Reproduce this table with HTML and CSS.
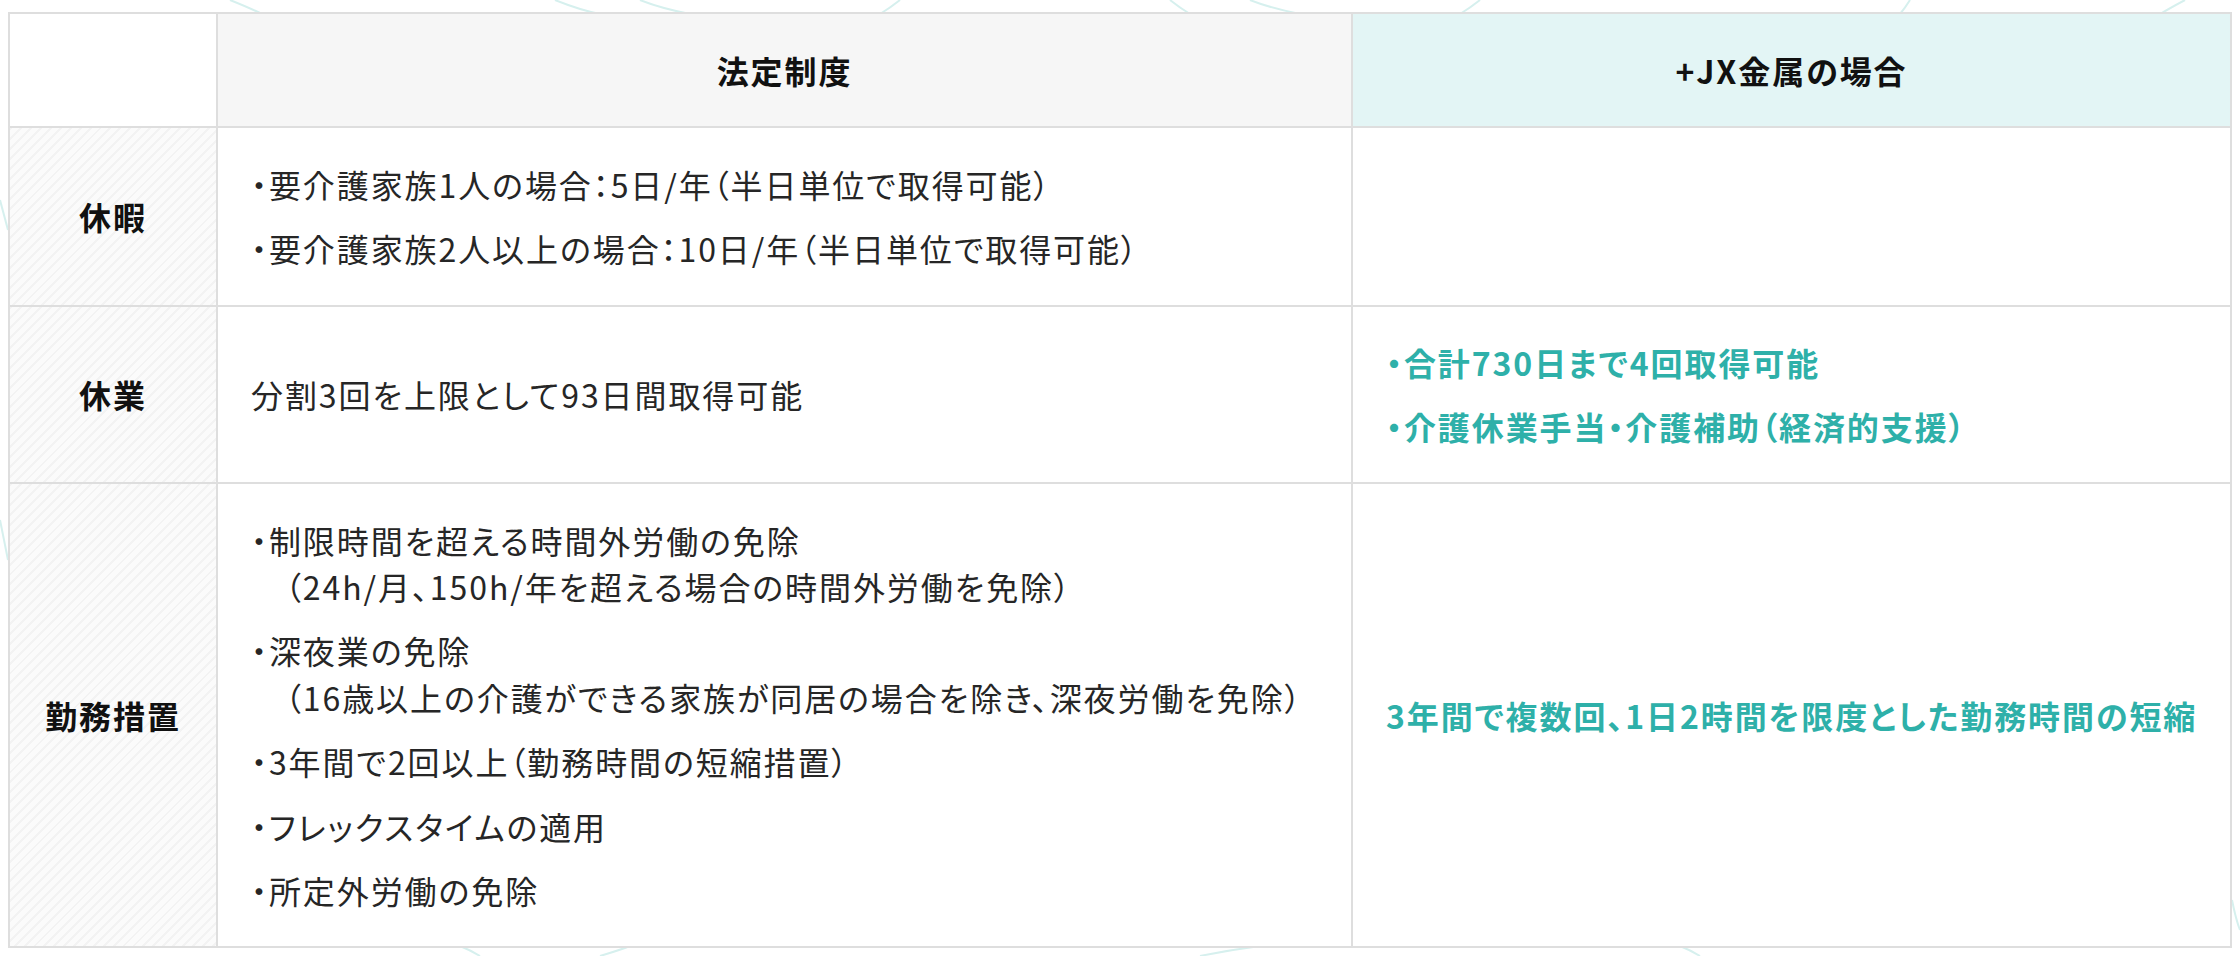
FILE: index.html
```html
<!DOCTYPE html>
<html lang="ja">
<head>
<meta charset="utf-8">
<title>介護支援制度</title>
<link rel="stylesheet" href="styles.css">
</head>
<body>
<div class="page">
  <svg class="deco" width="2240" height="956" viewBox="0 0 2240 956" aria-hidden="true">
    <g fill="none" stroke="#d6f0ee" stroke-width="2">
      <path d="M230 0 Q250 8 262 14"/>
      <path d="M555 0 Q580 10 600 14"/>
      <path d="M640 0 Q660 8 690 14"/>
      <path d="M900 0 Q890 8 880 14"/>
      <path d="M1170 0 Q1180 8 1190 14"/>
      <path d="M1250 0 Q1270 8 1300 14"/>
      <path d="M1480 0 Q1470 8 1460 14"/>
      <path d="M1910 0 Q1905 8 1900 14"/>
      <path d="M2185 0 Q2170 8 2160 14"/>
      <path d="M480 956 Q470 950 460 946"/>
      <path d="M600 956 Q620 950 630 946"/>
      <path d="M1200 956 Q1230 950 1260 946"/>
      <path d="M1700 956 Q1690 950 1680 946"/>
      <path d="M2232 900 Q2236 920 2240 930"/>
      <path d="M0 200 Q4 215 8 230"/>
      <path d="M0 520 Q4 540 8 560"/>
    </g>
  </svg>
  <table class="compare">
    <colgroup>
      <col class="col-label">
      <col class="col-law">
      <col class="col-jx">
    </colgroup>
    <thead>
      <tr>
        <th class="corner"></th>
        <th class="head head-law">法定制度</th>
        <th class="head head-jx">+JX金属の場合</th>
      </tr>
    </thead>
    <tbody>
      <tr>
        <th class="label">休暇</th>
        <td class="law">
          <ul class="items">
            <li>・要介護家族1人の場合：5日/年（半日単位で取得可能）</li>
            <li>・要介護家族2人以上の場合：10日/年（半日単位で取得可能）</li>
          </ul>
        </td>
        <td class="jx"></td>
      </tr>
      <tr>
        <th class="label">休業</th>
        <td class="law">
          <ul class="items">
            <li>分割3回を上限として93日間取得可能</li>
          </ul>
        </td>
        <td class="jx">
          <ul class="items">
            <li>・合計730日まで4回取得可能</li>
            <li>・介護休業手当・介護補助（経済的支援）</li>
          </ul>
        </td>
      </tr>
      <tr>
        <th class="label">勤務措置</th>
        <td class="law">
          <ul class="items">
            <li>・制限時間を超える時間外労働の免除<br>　（24h/月、150h/年を超える場合の時間外労働を免除）</li>
            <li>・深夜業の免除<br>　（16歳以上の介護ができる家族が同居の場合を除き、深夜労働を免除）</li>
            <li>・3年間で2回以上（勤務時間の短縮措置）</li>
            <li>・フレックスタイムの適用</li>
            <li>・所定外労働の免除</li>
          </ul>
        </td>
        <td class="jx">
          <ul class="items">
            <li>3年間で複数回、1日2時間を限度とした勤務時間の短縮</li>
          </ul>
        </td>
      </tr>
    </tbody>
  </table>
</div>
</body>
</html>
```

FILE: styles.css
```css
* {
  box-sizing: border-box;
}

html, body {
  margin: 0;
  padding: 0;
  background: #ffffff;
}

body {
  font-family: "Noto Sans CJK JP", "Noto Sans", sans-serif;
  font-feature-settings: "palt";
  color: #262626;
}

.page {
  position: relative;
  width: 2240px;
  height: 956px;
  padding: 12px 8px 0 8px;
}

.deco {
  position: absolute;
  left: 0;
  top: 0;
  z-index: 0;
}

.compare {
  position: relative;
  z-index: 1;
  width: 100%;
  border-collapse: collapse;
  table-layout: fixed;
  background: #ffffff;
  border: 2px solid #dedede;
}

.col-label {
  width: 208px;
}

.col-law {
  width: 1135px;
}

.compare th,
.compare td {
  border: 2px solid #dedede;
  vertical-align: middle;
  font-size: 32px;
  line-height: 1.45;
  letter-spacing: 0.06em;
}

.corner {
  background: #ffffff;
}

.head {
  height: 114px;
  padding: 0 20px;
  text-align: center;
  font-weight: 700;
  color: #111111;
  letter-spacing: 0.05em;
}

.head-law {
  background: #f6f6f6;
}

.head-jx {
  background: #e3f5f5;
}

.label {
  text-align: center;
  font-weight: 700;
  color: #111111;
  padding: 0 10px;
  letter-spacing: 0.02em;
  background-color: #fafafa;
  background-image: repeating-linear-gradient(
    135deg,
    #f3f3f3 0,
    #f3f3f3 2px,
    #fbfbfb 2px,
    #fbfbfb 7px
  );
}

.law {
  padding: 33px 33px;
  text-align: left;
}

.jx {
  padding: 32px 20px 32px 33px;
  text-align: left;
  color: #2eb0a9;
  font-weight: 700;
  letter-spacing: 0.02em;
}

.items {
  list-style: none;
  margin: 0;
  padding: 0;
}

.items li + li {
  margin-top: 18px;
}
```
